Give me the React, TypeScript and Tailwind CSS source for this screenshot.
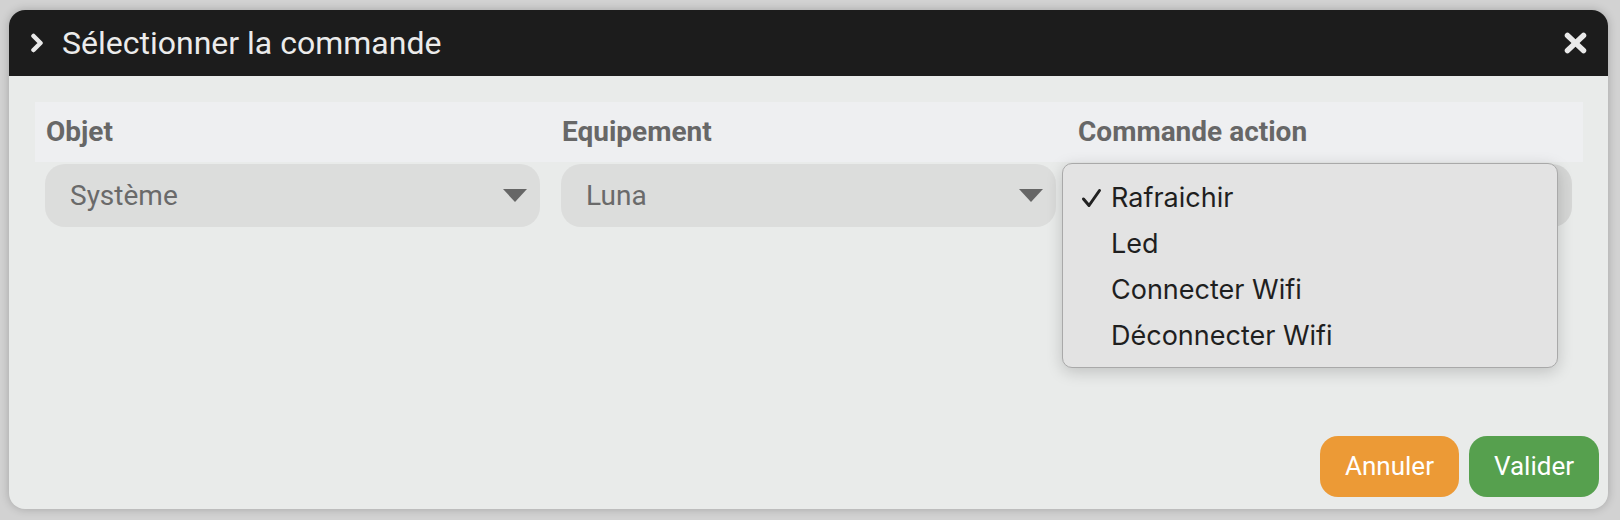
import React from "react";

function Arrow() {
  return (
    <svg width="24" height="13" viewBox="0 0 24 13">
      <polygon points="0,0 24,0 12,13" fill="#666666" />
    </svg>
  );
}

function Check() {
  return (
    <svg width="21" height="20" viewBox="0 0 21 20">
      <polyline points="2.5,11 8,17.5 18.5,2.5" fill="none" stroke="#222222" strokeWidth="3" strokeLinecap="round" strokeLinejoin="round" />
    </svg>
  );
}

export default function App() {
  const items = ["Rafraichir", "Led", "Connecter Wifi", "Déconnecter Wifi"];
  return (
    <div className="w-[1620px] h-[520px] bg-[#d2d2d2] pt-[10px] pl-[9px] overflow-hidden font-['Roboto',sans-serif]">
      <div className="w-[1599px] h-[499px] rounded-[16px] overflow-hidden flex flex-col bg-[#e9ebea] shadow-[0_0_10px_rgba(0,0,0,0.22)]">
        <div className="h-[66px] shrink-0 bg-[#1c1c1c] flex items-center pl-[21px] pr-[21px]">
          <svg width="14" height="20" viewBox="0 0 14 20">
            <polyline points="3.5,3 10.5,10 3.5,17" fill="none" stroke="#e9e9e9" strokeWidth="4.5" strokeLinecap="round" strokeLinejoin="round" />
          </svg>
          <div className="ml-[18px] text-[32px] text-[#ebebeb] leading-none flex-1">Sélectionner la commande</div>
          <svg width="23" height="22" viewBox="0 0 23 22">
            <line x1="3.5" y1="3.5" x2="19.5" y2="18.5" stroke="#e9e9e9" strokeWidth="5.5" strokeLinecap="round" />
            <line x1="19.5" y1="3.5" x2="3.5" y2="18.5" stroke="#e9e9e9" strokeWidth="5.5" strokeLinecap="round" />
          </svg>
        </div>
        <div className="flex-1 px-[26px] pt-[26px]">
          <div className="w-[1548px]">
            <div className="grid grid-cols-3 h-[60px] bg-[#eeeff1]">
              {["Objet", "Equipement", "Commande action"].map((l) => (
                <div key={l} className="flex items-center pl-[11px] text-[28px] font-bold text-[#676767]">
                  {l}
                </div>
              ))}
            </div>
            <div className="grid grid-cols-3 mt-[2px]">
              {["Système", "Luna"].map((v) => (
                <div key={v} className="pl-[10px] pr-[11px]">
                  <div className="h-[63px] rounded-[20px] bg-[#dcdddc] flex items-center justify-between pl-[25px] pr-[13px] text-[28px] text-[#6a6a6a]">
                    <span>{v}</span>
                    <Arrow />
                  </div>
                </div>
              ))}
              <div className="pl-[10px] pr-[11px]">
                <div className="relative h-[63px] rounded-[20px] bg-[#d6d7d6]">
                  <div className="absolute left-[-15px] top-[-1px] w-[496px] h-[205px] rounded-[10px] border border-[#a9a9a9] bg-[#e3e3e3] shadow-[0_4px_16px_rgba(0,0,0,0.18)] pt-[11px] font-['Inter',sans-serif]">
                    {items.map((it, i) => (
                      <div key={it} className="h-[46px] flex items-center pl-[18px] text-[27px] text-[#1f1f1f]">
                        <span className="w-[30px] flex items-center">{i === 0 ? <Check /> : null}</span>
                        <span>{it}</span>
                      </div>
                    ))}
                  </div>
                </div>
              </div>
            </div>
          </div>
        </div>
        <div className="shrink-0 flex justify-end gap-[10px] pr-[9px] pb-[12px]">
          <button className="h-[61px] rounded-[18px] bg-[#ec9a36] px-[25px] text-[26px] text-white">Annuler</button>
          <button className="h-[61px] rounded-[18px] bg-[#56a04e] px-[25px] text-[26px] text-white">Valider</button>
        </div>
      </div>
    </div>
  );
}
